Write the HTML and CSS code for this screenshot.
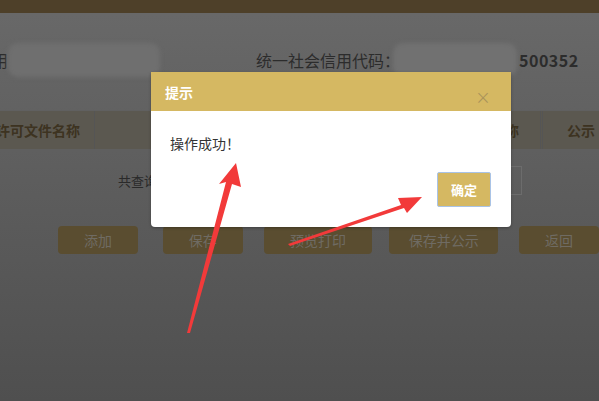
FILE: index.html
```html
<!DOCTYPE html>
<html lang="zh-CN">
<head>
  <meta charset="UTF-8" />
  <meta name="viewport" content="width=device-width, initial-scale=1.0"/>
  <title>提示</title>
  <link rel="stylesheet" href="styles.css">
</head>
<body>
  <div class="page">
    <div class="top-bar"></div>

    <div class="info-row">
      <span class="cut-text">用</span>
      <div class="blur blur-name"></div>
      <span class="label">统一社会信用代码：</span>
      <div class="blur blur-code"></div>
      <span class="code">500352</span>
    </div>

    <div class="table-head">
      <div class="th th-first">许可文件名称</div>
      <div class="th th-mid">称</div>
      <div class="th th-last">公示</div>
    </div>

    <div class="query-row">
      <span class="query-text">共查询</span>
      <div class="query-input"></div>
    </div>

    <div class="btn-row">
      <button class="btn btn-add">添加</button>
      <button class="btn btn-save">保存</button>
      <button class="btn btn-print">预览打印</button>
      <button class="btn btn-publish">保存并公示</button>
      <button class="btn btn-back">返回</button>
    </div>
  </div>

  <div class="dialog">
    <div class="dialog-head">
      <span class="dialog-title">提示</span>
      <span class="dialog-close">×</span>
    </div>
    <div class="dialog-body">
      <p class="dialog-msg">操作成功！</p>
      <div class="dialog-foot">
        <button class="ok-button">确定</button>
      </div>
    </div>
  </div>

  <svg class="arrows" width="599" height="401" viewBox="0 0 599 401">
    <polygon fill="#f23a3a" points="187,333 226,182 219,184 236,163 241,187 232,184 190,333" />
    <polygon fill="#f23a3a" points="288,244 401,205 398,198 422,197 407,213 404,208 290,246" />
  </svg>
</body>
</html>
```

FILE: styles.css
```css
body {
  margin: 0;
  width: 599px;
  height: 401px;
  overflow: hidden;
  position: relative;
  font-family: "Noto Sans CJK SC", "Noto Sans", sans-serif;
  background: linear-gradient(180deg, #696969 0%, #5d5d5d 45%, #4f4f4f 100%);
}

.page {
  display: flex;
  flex-direction: column;
}

.top-bar {
  height: 13px;
  background: #4e4029;
}

.info-row {
  box-sizing: border-box;
  height: 70px;
  padding-top: 25px;
  display: flex;
  align-items: center;
  border-bottom: 1px solid #636363;
  color: #2c2c2c;
  font-size: 16px;
}

.cut-text {
  margin-left: -8px;
  width: 16px;
}

.blur {
  height: 34px;
  background: #6f6f6f;
  border-radius: 10px;
  filter: blur(2px);
}

.blur-name {
  width: 152px;
}

.label {
  margin-left: 96px;
}

.blur-code {
  width: 124px;
  margin-left: -7px;
  background: #717171;
}

.code {
  font-weight: bold;
  margin-left: 2px;
  letter-spacing: 0.5px;
}

.table-head {
  margin-top: 27px;
  height: 38px;
  display: flex;
  align-items: center;
  background: #5b5850;
  border-top: 1px solid #606060;
  color: #3d3321;
  font-size: 14px;
  font-weight: bold;
}

.th {
  box-sizing: border-box;
  height: 100%;
  display: flex;
  align-items: center;
}

.th-first {
  width: 99px;
  margin-left: -4px;
  border-right: 1px solid #555;
}

.th-mid {
  margin-left: auto;
  width: 38px;
  border-right: 3px double #555;
}

.th-last {
  padding-left: 24px;
  width: 56px;
}

.query-row {
  height: 62px;
  display: flex;
  align-items: center;
  color: #2a2a2a;
  font-size: 13px;
}

.query-text {
  margin-left: 118px;
}

.query-input {
  margin-left: auto;
  margin-right: 77px;
  width: 12px;
  height: 27px;
  border: 1px solid #6c6c6c;
  border-left: none;
}

.btn-row {
  margin-top: 15px;
  display: flex;
}

.btn {
  height: 28px;
  border: none;
  border-radius: 4px;
  background: #5a4d30;
  color: #6f6b63;
  font-family: "Noto Sans CJK SC", "Noto Sans", sans-serif;
  font-size: 14px;
  padding: 0;
}

.btn-add { margin-left: 58px; width: 80px; }
.btn-save { margin-left: 25px; width: 80px; }
.btn-print { margin-left: 21px; width: 109px; }
.btn-publish { margin-left: 17px; width: 109px; }
.btn-back { margin-left: 21px; width: 80px; }

.dialog {
  position: absolute;
  left: 151px;
  top: 72px;
  width: 360px;
  height: 155px;
  background: #fff;
  border-radius: 0 0 4px 4px;
  box-shadow: 0 1px 3px rgba(0, 0, 0, 0.3);
  display: flex;
  flex-direction: column;
}

.dialog-head {
  height: 39px;
  background: #d5b862;
  display: flex;
  align-items: center;
  padding: 0 20px 0 14px;
}

.dialog-title {
  color: #fff;
  font-size: 14px;
  font-weight: bold;
}

.dialog-close {
  margin-left: auto;
  margin-top: 10px;
  color: #a8925a;
  font-size: 19px;
  font-family: "DejaVu Sans", sans-serif;
  font-weight: 300;
}

.dialog-body {
  flex: 1;
  display: flex;
  flex-direction: column;
  padding: 0 20px 20px 19px;
}

.dialog-msg {
  margin: 22px 0 0 0;
  font-size: 14px;
  color: #333;
}

.dialog-foot {
  margin-top: auto;
  display: flex;
  justify-content: flex-end;
}

.ok-button {
  width: 54px;
  height: 35px;
  background: #d5b862;
  border: 1px solid #a9c3e6;
  border-radius: 2px;
  color: #fff;
  font-family: "Noto Sans CJK SC", "Noto Sans", sans-serif;
  font-size: 13px;
  font-weight: bold;
  padding: 0;
}

.arrows {
  position: absolute;
  left: 0;
  top: 0;
}
```
